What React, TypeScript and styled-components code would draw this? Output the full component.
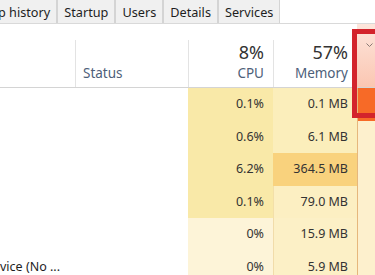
import React from "react";
import styled, { createGlobalStyle } from "styled-components";

const Global = createGlobalStyle`
  html, body { margin: 0; padding: 0; background: #ffffff; }
  body { font-family: "Noto Sans", "Open Sans", sans-serif; }
`;

const Frame = styled.div`
  position: relative;
  width: 375px;
  height: 275px;
  overflow: hidden;
  background: #ffffff;
`;

const TabBar = styled.div`
  display: flex;
  align-items: flex-end;
  height: 24px;
  box-sizing: border-box;
  border-bottom: 1px solid #d9d9d9;
`;

const Tab = styled.div<{ $first?: boolean }>`
  height: 24px;
  box-sizing: border-box;
  margin-top: -1px;
  margin-left: ${(p) => (p.$first ? "-3px" : "0")};
  padding: 0 6px 0 ${(p) => (p.$first ? "0" : "6px")};
  background: #f0f0f0;
  border: 1px solid #d4d4d4;
  border-bottom: none;
  font-size: 12.7px;
  line-height: 24px;
  color: #1e1e1e;
  white-space: nowrap;
`;

const COLS = "75px 113px 85px 84px 1fr";

const Header = styled.div`
  display: grid;
  grid-template-columns: ${COLS};
  height: 64px;
  border-bottom: 1px solid #d4d4d4;
  box-sizing: border-box;
`;

const HeadCell = styled.div<{ $align: "start" | "end"; $sep?: boolean }>`
  position: relative;
  display: flex;
  flex-direction: column;
  justify-content: flex-end;
  align-items: ${(p) => (p.$align === "end" ? "flex-end" : "flex-start")};
  padding: 0 9px 4px 8px;
  box-sizing: border-box;
  &::before {
    content: "";
    display: ${(p) => (p.$sep ? "block" : "none")};
    position: absolute;
    left: 0;
    top: 16px;
    bottom: 0;
    width: 1px;
    background: #e3e3e3;
  }
`;

const SelectedHead = styled.div`
  position: relative;
  background: linear-gradient(#fde6dc, #fbc6b2);
`;

const Caret = styled.svg`
  position: absolute;
  left: 9px;
  top: 19px;
`;

const Percent = styled.div`
  font-size: 18px;
  line-height: 23px;
  color: #333333;
`;

const Label = styled.div`
  font-size: 13.5px;
  line-height: 19px;
  color: #4d6079;
`;

const Row = styled.div`
  display: grid;
  grid-template-columns: ${COLS};
  height: 32.6px;
`;

const NameCell = styled.div`
  font-size: 12.5px;
  line-height: 32.6px;
  color: #1e1e1e;
  white-space: nowrap;
  overflow: visible;
`;

const NumCell = styled.div<{ $bg: string; $line?: string }>`
  background: ${(p) => p.$bg};
  border-left: 1px solid ${(p) => p.$line ?? "transparent"};
  font-size: 12.5px;
  line-height: 32.6px;
  color: #333333;
  text-align: right;
  padding-right: 9px;
  box-sizing: border-box;
  white-space: nowrap;
`;

const SelCell = styled.div<{ $bg: string }>`
  background: ${(p) => p.$bg};
  border-left: 1px solid #e6b77c;
`;

const Highlight = styled.div`
  position: absolute;
  left: 352px;
  top: 29px;
  width: 40px;
  height: 89px;
  box-sizing: border-box;
  border: 5px solid #d3242c;
  pointer-events: none;
`;

type RowData = {
  name?: string;
  cpu: string;
  mem: string;
  cpuBg: string;
  memBg: string;
  memLine?: string;
  selBg: string;
};

const rows: RowData[] = [
  { cpu: "0.1%", mem: "0.1 MB", cpuBg: "#f9e9a8", memBg: "#fbeebb", selBg: "#f76a27" },
  { cpu: "0.6%", mem: "6.1 MB", cpuBg: "#f9e9a8", memBg: "#fbeebb", selBg: "#fdf0cd" },
  { cpu: "6.2%", mem: "364.5 MB", cpuBg: "#f9e9a8", memBg: "#f9d27d", selBg: "#fdf0cd" },
  { cpu: "0.1%", mem: "79.0 MB", cpuBg: "#f9e9a8", memBg: "#fcefc2", memLine: "#f3dfa8", selBg: "#fdf0cd" },
  { cpu: "0%", mem: "15.9 MB", cpuBg: "#fdf4d8", memBg: "#fcf0c6", memLine: "#f1dcaa", selBg: "#fdf0cd" },
  { name: "vice (No ...", cpu: "0%", mem: "5.9 MB", cpuBg: "#fdf4d8", memBg: "#fcf0c6", memLine: "#f1dcaa", selBg: "#fdf0cd" },
];

export default function App() {
  return (
    <Frame>
      <Global />
      <TabBar>
        <Tab $first>p history</Tab>
        <Tab>Startup</Tab>
        <Tab>Users</Tab>
        <Tab>Details</Tab>
        <Tab>Services</Tab>
      </TabBar>
      <Header>
        <HeadCell $align="start" />
        <HeadCell $align="start" $sep>
          <Label>Status</Label>
        </HeadCell>
        <HeadCell $align="end" $sep>
          <Percent>8%</Percent>
          <Label>CPU</Label>
        </HeadCell>
        <HeadCell $align="end" $sep>
          <Percent>57%</Percent>
          <Label>Memory</Label>
        </HeadCell>
        <SelectedHead>
          <Caret width="7" height="4" viewBox="0 0 7 4">
            <path d="M0.5 0.5 L3.5 3.5 L6.5 0.5" fill="none" stroke="#8a7a74" strokeWidth="1" />
          </Caret>
        </SelectedHead>
      </Header>
      {rows.map((r, i) => (
        <Row key={i}>
          <NameCell>{r.name ?? ""}</NameCell>
          <div />
          <NumCell $bg={r.cpuBg}>{r.cpu}</NumCell>
          <NumCell $bg={r.memBg} $line={r.memLine}>{r.mem}</NumCell>
          <SelCell $bg={r.selBg} />
        </Row>
      ))}
      <Highlight />
    </Frame>
  );
}
